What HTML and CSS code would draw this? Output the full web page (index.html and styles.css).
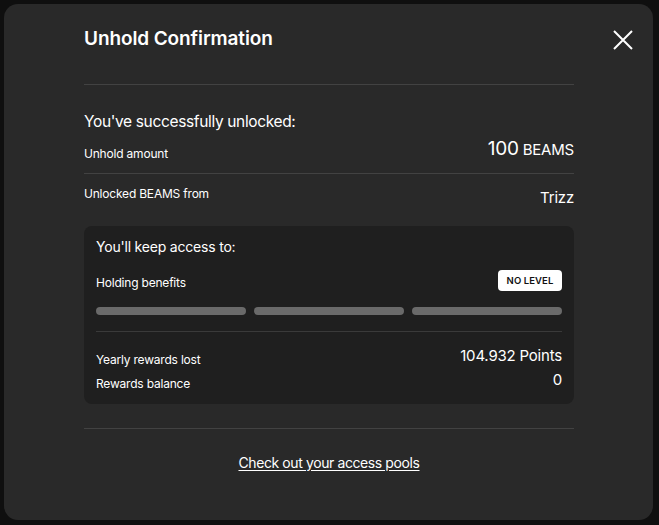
FILE: index.html
```html
<!DOCTYPE html>
<html>
<head>
<meta charset="utf-8">
<link rel="stylesheet" href="styles.css">
</head>
<body>
<div class="modal">
  <button class="close" aria-label="Close">
    <svg width="20" height="20" viewBox="0 0 20 20"><path d="M1 1 L19 19 M19 1 L1 19" stroke="#fff" stroke-width="2" fill="none" stroke-linecap="butt"/></svg>
  </button>
  <div class="content">
    <h1 class="title">Unhold Confirmation</h1>
    <hr class="sep top-sep">
    <p class="lead">You've successfully unlocked:</p>
    <div class="row amount-row">
      <span class="label">Unhold amount</span>
      <span class="value big"><span class="num">100</span> <span class="unit">BEAMS</span></span>
    </div>
    <hr class="sep">
    <div class="row from-row">
      <span class="label">Unlocked BEAMS from</span>
      <span class="value">Trizz</span>
    </div>
    <div class="card">
      <p class="card-title">You'll keep access to:</p>
      <div class="row bene-row">
        <span class="label">Holding benefits</span>
        <span class="badge">NO LEVEL</span>
      </div>
      <div class="bars">
        <div class="bar"></div><div class="bar"></div><div class="bar"></div>
      </div>
      <hr class="sep card-sep">
      <div class="row reward-row">
        <span class="label">Yearly rewards lost</span>
        <span class="value">104.932 Points</span>
      </div>
      <div class="row reward-row2">
        <span class="label">Rewards balance</span>
        <span class="value">0</span>
      </div>
    </div>
    <hr class="sep bottom-sep">
    <div class="link-wrap"><a class="link" href="#">Check out your access pools</a></div>
  </div>
</div>
</body>
</html>
```

FILE: styles.css
```css
* { box-sizing: border-box; }
html, body { margin: 0; padding: 0; }
body {
  background: #0f0f0f;
  width: 659px;
  height: 525px;
  font-family: Inter, "Noto Sans", sans-serif;
  color: #fff;
  padding: 4px 6px 5px 4px;
  letter-spacing: -0.2px;
}
.modal {
  position: relative;
  background: #292929;
  border-radius: 14px;
  width: 649px;
  height: 516px;
  padding: 0 79px 0 80px;
}
.close {
  position: absolute;
  top: 26px;
  right: 20px;
  background: none;
  border: 0;
  padding: 0;
  width: 20px;
  height: 20px;
  cursor: pointer;
}
.close svg { display: block; }
.content { display: flex; flex-direction: column; }
.title {
  margin: 0;
  padding-top: 22px;
  font-size: 19px;
  font-weight: 600;
  line-height: 26px;
  letter-spacing: -0.1px;
}
.sep {
  border: 0;
  height: 1px;
  background: #424242;
  margin: 0;
}
.top-sep { margin-top: 32px; }
.lead {
  margin: 27px 0 0;
  font-size: 15.5px;
  line-height: 20px;
  font-weight: 400;
  letter-spacing: -0.35px;
}
.row {
  display: flex;
  justify-content: space-between;
  align-items: flex-end;
}
.label { font-size: 12px; line-height: 16px; }
.value { font-size: 15px; line-height: 20px; }
.amount-row { margin-top: 5px; padding-bottom: 11px; align-items: center; }
.amount-row .label { margin-top: 9px; }
.big .num { font-size: 19px; letter-spacing: -0.3px; }
.big .unit { font-size: 15px; }
.from-row { margin-top: 12px; align-items: flex-start; }
.from-row .value { margin-top: 2px; }
.card {
  margin-top: 18px;
  background: #1f1f1f;
  border-radius: 8px;
  padding: 12px 12px 12px;
}
.card-title { margin: 0; font-size: 14px; line-height: 18px; }
.bene-row { margin-top: 14px; align-items: flex-start; }
.bene-row .label { margin-top: 5px; }
.badge {
  background: #fff;
  color: #111;
  font-size: 9.5px;
  font-weight: 600;
  border-radius: 4px;
  padding: 0 8px;
  height: 21px;
  line-height: 21px;
  width: 64px;
  text-align: center;
  letter-spacing: 0.1px;
}
.bars {
  display: grid;
  grid-template-columns: repeat(3, 1fr);
  gap: 8px;
  margin-top: 16px;
}
.bar { height: 8px; background: #6a6a6a; border-radius: 4px; }
.card-sep { margin-top: 16px; background: #3a3a3a; }
.reward-row { margin-top: 14px; align-items: flex-end; }
.reward-row2 { margin-top: 2px; align-items: flex-end; }
.reward-row .value, .reward-row2 .value { margin-bottom: 2px; }
.bottom-sep { margin-top: 24px; }
.link-wrap { text-align: center; margin-top: 23px; }
.link {
  color: #fff;
  font-size: 14px;
  line-height: 18px;
  text-decoration: underline;
  text-underline-offset: 2px;
  letter-spacing: -0.4px;
}
```
